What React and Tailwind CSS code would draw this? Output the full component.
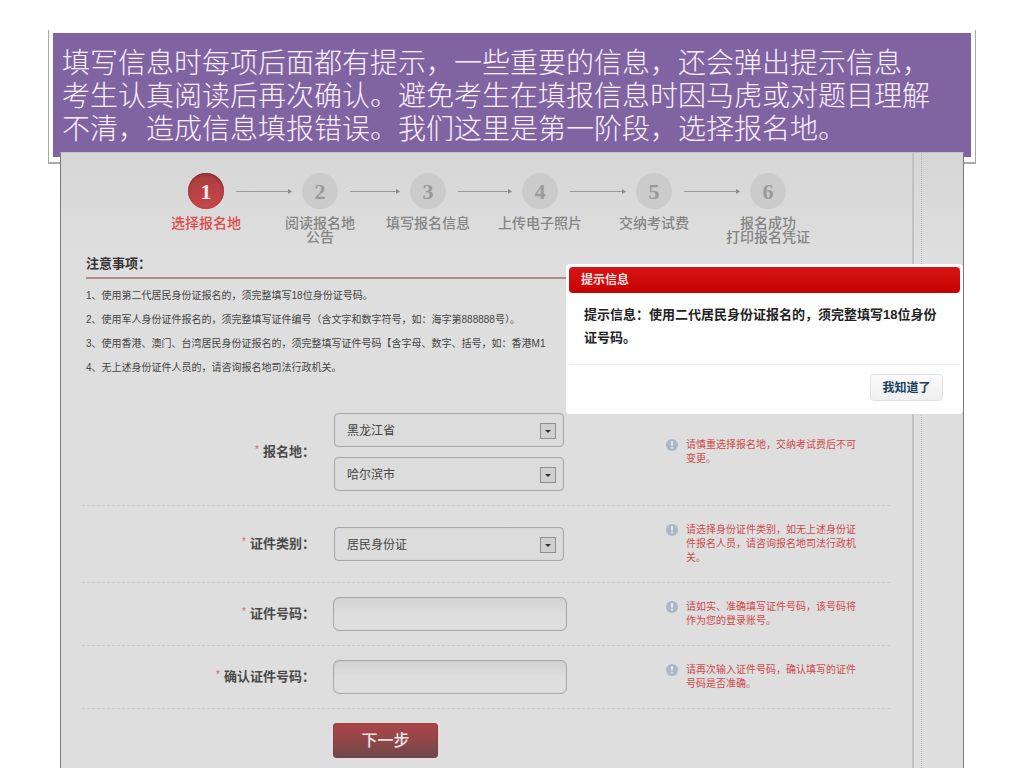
import { useState } from 'react';

const steps = [
  { label: ['选择报名地'], gap: 'w-[78px]' },
  { label: ['阅读报名地', '公告'], gap: 'w-[72px]' },
  { label: ['填写报名信息'], gap: 'w-[76px]' },
  { label: ['上传电子照片'], gap: 'w-[78px]' },
  { label: ['交纳考试费'], gap: 'w-[78px]' },
  { label: ['报名成功', '打印报名凭证'] },
];

const notes = [
  '1、使用第二代居民身份证报名的，须完整填写18位身份证号码。',
  '2、使用军人身份证件报名的，须完整填写证件编号（含文字和数字符号，如：海字第888888号）。',
  '3、使用香港、澳门、台湾居民身份证报名的，须完整填写证件号码【含字母、数字、括号，如：香港M1',
  '4、无上述身份证件人员的，请咨询报名地司法行政机关。',
];

function Stepper({ current }) {
  return (
    <ol className="ml-[102px] flex h-[70px]">
      {steps.map((step, i) => {
        const active = i + 1 === current;
        return (
          <li key={step.label[0]} className="flex">
            <div className="flex w-9 flex-col items-center">
              <span
                className={`flex h-9 w-9 shrink-0 items-center justify-center rounded-full font-['Liberation_Serif'] text-[22px] font-bold ${
                  active
                    ? 'bg-linear-to-b from-[#a83c3f] to-[#c9474a] text-[#f3e4e4] shadow-[inset_0_1px_3px_#7d2b2e]'
                    : 'bg-[#cbcbcb] text-[#999]'
                }`}
              >
                {i + 1}
              </span>
              <span
                className={`mt-[7px] text-center text-[14px] leading-[14px] font-medium whitespace-nowrap ${
                  active ? 'text-[#dc4c4a]' : 'text-[#858585]'
                }`}
              >
                {step.label.map((line) => (
                  <span key={line} className="block">{line}</span>
                ))}
              </span>
            </div>
            {step.gap && (
              <div className={`flex h-9 items-center pr-2.5 pl-3 ${step.gap}`}>
                <span className="h-px flex-1 bg-[#999]"></span>
                <svg className="h-[5px] w-1" viewBox="0 0 4 5" fill="#8c8c8c">
                  <path d="M0 0L4 2.5L0 5Z" />
                </svg>
              </div>
            )}
          </li>
        );
      })}
    </ol>
  );
}

function Hint({ children }) {
  return (
    <div className="ml-[99px] flex gap-2">
      <svg className="mt-px h-3 w-3 shrink-0" viewBox="0 0 12 12">
        <circle cx="6" cy="6" r="6" fill="#a9b7c6" />
        <path d="M4.9 2.3H7.1L6.7 6.8H5.3Z" fill="#e9edf1" />
        <circle cx="6" cy="8.7" r="1" fill="#e9edf1" />
      </svg>
      <p className="w-[178px] text-[10px] leading-[14px] text-[#cf4b4b]">{children}</p>
    </div>
  );
}

function Row({ id, label, hint, className, children }) {
  return (
    <div className={`grid grid-cols-[233px_234px_1fr] items-center border-b border-dashed border-[#cacaca] ${className}`}>
      <label htmlFor={id} className="text-right text-[13px] font-bold text-[#4a4a4a]">
        <span className="mr-1 align-top text-[10px] font-normal text-[#d46a6a]">*</span>
        {label}：
      </label>
      <div className="ml-[18px] flex w-[234px] flex-col gap-2.5">{children}</div>
      <div className="pl-[18px]">
        <Hint>{hint}</Hint>
      </div>
    </div>
  );
}

function SelectBox({ id, options, title }) {
  return (
    <div className="relative ml-px w-[230px]">
      <select
        id={id}
        aria-label={title}
        className="block h-[34px] w-full appearance-none rounded border border-[#a9a9a9] bg-[#dcdcdc] pt-0.5 pl-3 text-[12px] text-[#444] shadow-[inset_0_0_1px_#a9a9a9]"
      >
        {options.map((o) => (
          <option key={o}>{o}</option>
        ))}
      </select>
      <svg className="pointer-events-none absolute top-2.5 right-2 h-4 w-4" viewBox="0 0 16 16">
        <rect x="0.5" y="0.5" width="15" height="15" fill="#cfcfcf" stroke="#8f8f8f" />
        <path d="M5 7H11L8 10Z" fill="#333" />
      </svg>
    </div>
  );
}

function TextBox({ id }) {
  return (
    <input
      id={id}
      type="text"
      className="block h-[34px] w-full rounded-md border border-[#a9a9a9] bg-linear-to-b from-[#d2d2d2] to-[#dedede] to-50% px-3 text-[12px] text-[#444] shadow-[inset_0_0_1px_#a9a9a9]"
    />
  );
}

function Notice({ onClose }) {
  return (
    <div role="dialog" className="absolute top-[111px] right-0 w-[397px] rounded bg-white p-[3px]">
      <h2 className="h-[26px] rounded bg-linear-to-b from-[#d81515] to-[#c60000] px-3 text-[12px] leading-[26px] font-bold text-[#fbe3e3]">
        提示信息
      </h2>
      <p className="border-b border-[#ececec] px-[15px] pt-2.5 pb-[15px] text-[13px] leading-[23px] font-bold text-[#222]">
        提示信息：使用二代居民身份证报名的，须完整填写18位身份证号码。
      </p>
      <div className="flex justify-end pt-[9px] pr-[17px] pb-2.5">
        <button
          onClick={onClose}
          className="h-[27px] w-[73px] rounded border border-[#e2e2e2] bg-linear-to-b from-[#fbfbfb] to-[#efefef] text-[12px] font-bold text-[#17405f]"
        >
          我知道了
        </button>
      </div>
    </div>
  );
}

export default function App() {
  const [open, setOpen] = useState(true);

  return (
    <div lang="zh-CN" className="flex min-h-screen flex-col bg-white font-['Liberation_Sans','Noto_Sans_CJK_SC',sans-serif]">
      <header className="mx-12 mt-[30px] border-x border-b-2 border-[#a8a8a8] px-1 pt-[3px] pb-[5px]">
        <h1 className="h-[124px] bg-[#8064a2] pt-[14px] pl-[9px] text-[28px] leading-[33px] font-light whitespace-nowrap text-[#fbeeff]">
          <span className="block">填写信息时每项后面都有提示，一些重要的信息，还会弹出提示信息，</span>
          <span className="block">考生认真阅读后再次确认。避免考生在填报信息时因马虎或对题目理解</span>
          <span className="block">不清，造成信息填报错误。我们这里是第一阶段，选择报名地。</span>
        </h1>
      </header>

      <div className="relative mx-[60px] -mt-3 flex flex-1 border-x border-t border-x-[#7a7a7a] border-t-[#c4c4c4] bg-linear-to-b from-[#d6d6d6] to-[#dedede] to-[100px]">
        <main className="min-w-0 flex-1 border-r-2 border-[#c2c2c2] pt-5 pr-[22px] pb-2.5">
          <div className="ml-[25px]">
            <Stepper current={1} />
            <h2 className="mt-[11px] border-b-2 border-[#ab8a8a] pb-[3px] text-[13px] leading-5 font-bold text-[#333]">
              注意事项：
            </h2>
            <ul className="mt-[5px] text-[10px] leading-[24px] whitespace-nowrap text-[#444]">
              {notes.map((n) => (
                <li key={n}>{n}</li>
              ))}
            </ul>
          </div>

          <form className="mt-[33px] ml-[21px]" onSubmit={(e) => e.preventDefault()}>
            <Row id="province" label="报名地" hint="请慎重选择报名地，交纳考试费后不可变更。" className="pb-[14px]">
              <SelectBox id="province" options={['黑龙江省']} />
              <SelectBox id="city" title="城市" options={['哈尔滨市']} />
            </Row>
            <Row
              id="idType"
              label="证件类别"
              hint="请选择身份证件类别，如无上述身份证件报名人员，请咨询报名地司法行政机关。"
              className="py-[17px]"
            >
              <SelectBox id="idType" options={['居民身份证']} />
            </Row>
            <Row id="idNo" label="证件号码" hint="请如实、准确填写证件号码，该号码将作为您的登录账号。" className="py-[14px]">
              <TextBox id="idNo" />
            </Row>
            <Row id="idNo2" label="确认证件号码" hint="请再次输入证件号码，确认填写的证件号码是否准确。" className="py-[14px]">
              <TextBox id="idNo2" />
            </Row>
            <button className="mt-[14px] ml-[251px] block h-[35px] w-[105px] rounded bg-linear-to-b from-[#ad4448] to-[#71474a] text-[16px] font-medium text-[#f0e4e2] shadow-[inset_0_0_2px_#6b3a3c]">
              下一步
            </button>
          </form>
        </main>
        <aside className="ml-[7px] w-[42px] border-l border-dotted border-[#b5b5b5]"></aside>

        {open && <Notice onClose={() => setOpen(false)} />}
      </div>
    </div>
  );
}
